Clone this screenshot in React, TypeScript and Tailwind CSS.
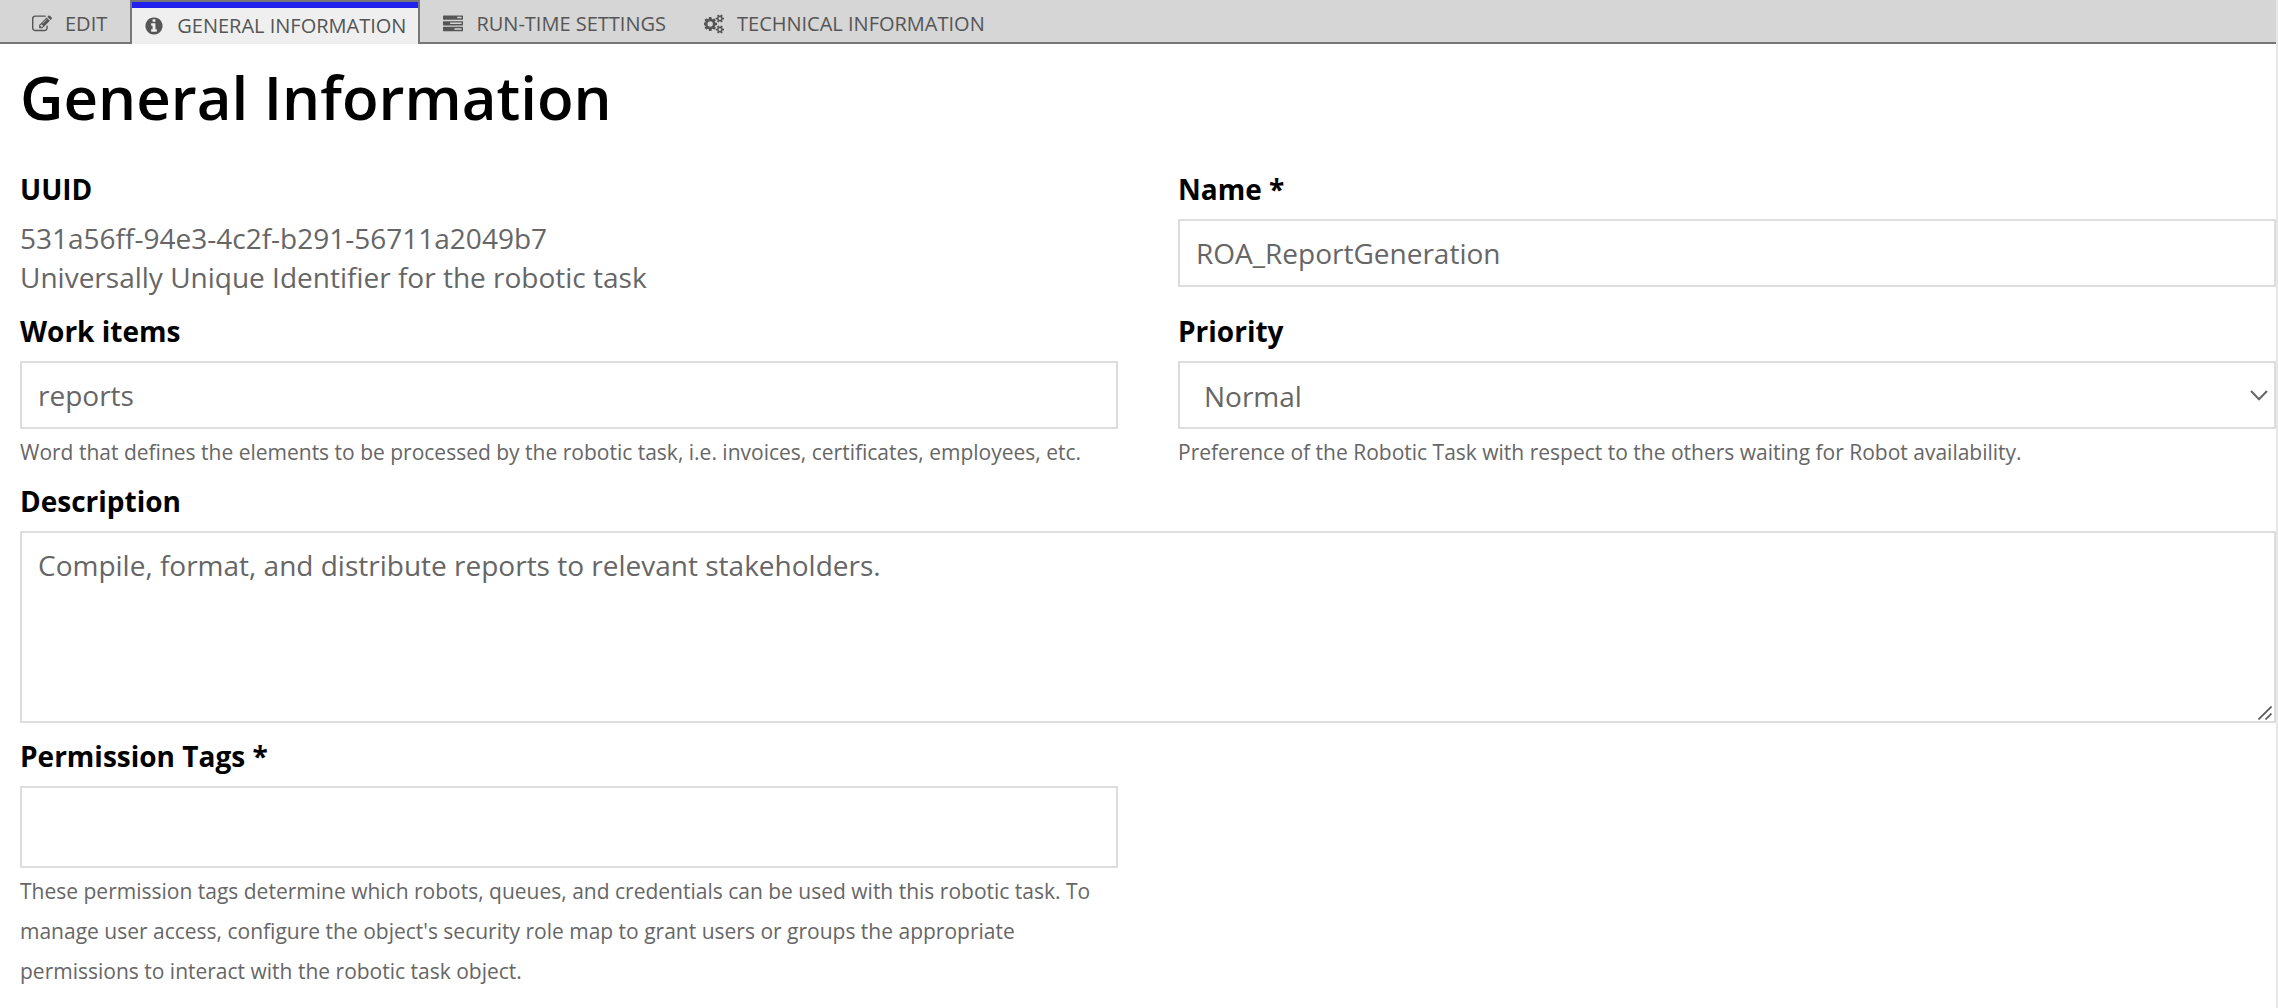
import type { ReactNode } from "react";

const labelClass = "mb-[11px] block text-[28px] leading-[38px] font-bold text-black";
const hintClass = "mt-[3px] text-[21px] leading-[40px] text-[#666666]";
const boxClass =
  "block w-full rounded-none border-2 border-[#dddddd] bg-white text-[28px] leading-[39px] text-[#666666] outline-none";

const icons = {
  edit: {
    viewBox: "0 0 1792 1792",
    d: "M888 1184l116-116-152-152-116 116v56h96v96h56zm440-720q-16-16-33 1l-350 350q-17 17-1 33t33-1l350-350q17-17 1-33zm80 594v190q0 119-84.5 203.5t-203.5 84.5h-832q-119 0-203.5-84.5t-84.5-203.5v-832q0-119 84.5-203.5t203.5-84.5h832q63 0 117 25 15 7 18 23 3 17-9 29l-49 49q-14 14-32 8-23-6-45-6h-832q-66 0-113 47t-47 113v832q0 66 47 113t113 47h832q66 0 113-47t47-113v-126q0-13 9-22l64-64q15-15 35-7t20 29zm-96-738l288 288-672 672h-288v-288zm444 132l-92 92-288-288 92-92q28-28 68-28t68 28l152 152q28 28 28 68t-28 68z",
  },
  info: {
    viewBox: "0 0 1792 1792",
    d: "M1152 1376v-160q0-14-9-23t-23-9h-96v-512q0-14-9-23t-23-9h-320q-14 0-23 9t-9 23v160q0 14 9 23t23 9h96v320h-96q-14 0-23 9t-9 23v160q0 14 9 23t23 9h448q14 0 23-9t9-23zm-128-896v-160q0-14-9-23t-23-9h-192q-14 0-23 9t-9 23v160q0 14 9 23t23 9h192q14 0 23-9t9-23zm640 416q0 209-103 385.5t-279.5 279.5-385.5 103-385.5-103-279.5-279.5-103-385.5 103-385.5 279.5-279.5 385.5-103 385.5 103 279.5 279.5 103 385.5z",
  },
  tasks: {
    viewBox: "0 0 1792 1792",
    d: "M1024 1408h640v-128h-640v128zm-384-512h1024v-128h-1024v128zm640-512h384v-128h-384v128zm512 832v256q0 26-19 45t-45 19h-1664q-26 0-45-19t-19-45v-256q0-26 19-45t45-19h1664q26 0 45 19t19 45zm0-512v256q0 26-19 45t-45 19h-1664q-26 0-45-19t-19-45v-256q0-26 19-45t45-19h1664q26 0 45 19t19 45zm0-512v256q0 26-19 45t-45 19h-1664q-26 0-45-19t-19-45v-256q0-26 19-45t45-19h1664q26 0 45 19t19 45z",
  },
  cogs: {
    viewBox: "0 0 1856 1792",
    d: "M832 896q0-106-75-181t-181-75-181 75-75 181 75 181 181 75 181-75 75-181zm768 512q0-52-38-90t-90-38-90 38-38 90q0 53 37.5 90.5t90.5 37.5 90.5-37.5 37.5-90.5zm0-1024q0-52-38-90t-90-38-90 38-38 90q0 53 37.5 90.5t90.5 37.5 90.5-37.5 37.5-90.5zm-384 421v185q0 10-7 19.5t-16 10.5l-155 24q-11 35-32 76 34 48 90 115 7 11 7 20 0 12-7 19-23 30-82.5 89.5t-78.5 59.5q-11 0-21-7l-115-90q-37 19-77 31-11 108-23 155-7 24-30 24h-186q-11 0-20-7.5t-10-17.5l-23-153q-34-10-75-31l-118 89q-7 7-20 7-11 0-21-8-144-133-144-160 0-9 7-19 10-14 41-53t47-61q-23-44-35-82l-152-24q-10-1-17-9.5t-7-19.5v-185q0-10 7-19.5t16-10.5l155-24q11-35 32-76-34-48-90-115-7-11-7-20 0-12 7-20 22-30 82-89t79-59q11 0 21 7l115 90q34-18 77-32 11-108 23-154 7-24 30-24h186q11 0 20 7.5t10 17.5l23 153q34 10 75 31l118-89q8-7 20-7 11 0 21 8 144 133 144 160 0 8-7 19-12 16-42 54t-45 60q23 48 34 82l152 23q10 2 17 10.5t7 19.5zm640 533v140q0 16-149 31-12 27-30 52 51 113 51 138 0 4-4 7-122 71-124 71-8 0-46-47t-52-68q-20 2-30 2t-30-2q-14 21-52 68t-46 47q-2 0-124-71-4-3-4-7 0-25 51-138-18-25-30-52-149-15-149-31v-140q0-16 149-31 13-29 30-52-51-113-51-138 0-4 4-7 4-2 35-20t59-34 30-16q8 0 46 46.5t52 67.5q20-2 30-2t30 2q51-71 92-112l6-2q4 0 124 70 4 3 4 7 0 25-51 138 17 23 30 52 149 15 149 31zm0-1024v140q0 16-149 31-12 27-30 52 51 113 51 138 0 4-4 7-122 71-124 71-8 0-46-47t-52-68q-20 2-30 2t-30-2q-14 21-52 68t-46 47q-2 0-124-71-4-3-4-7 0-25 51-138-18-25-30-52-149-15-149-31v-140q0-16 149-31 13-29 30-52-51-113-51-138 0-4 4-7 4-2 35-20t59-34 30-16q8 0 46 46.5t52 67.5q20-2 30-2t30 2q51-71 92-112l6-2q4 0 124 70 4 3 4 7 0 25-51 138 17 23 30 52 149 15 149 31z",
  },
};

function Tab({ icon, children, active }: { icon: keyof typeof icons; children: ReactNode; active?: boolean }) {
  return (
    <button
      type="button"
      role="tab"
      aria-selected={!!active}
      className={
        active
          ? "mx-1 flex h-[44px] items-center gap-[13px] border-x-2 border-t-2 border-[#777777] bg-[#efefef] px-3 pt-[6px] text-[20px] text-[#555555] shadow-[inset_0_6px_0_#2222ee]"
          : "flex h-[42px] items-center gap-[13px] px-[19px] pt-[6px] text-[20px] text-[#555555]"
      }
    >
      <svg viewBox={icons[icon].viewBox} className="h-5 w-5" fill="currentColor" aria-hidden="true">
        <path d={icons[icon].d} />
      </svg>
      {children}
    </button>
  );
}

export default function App() {
  return (
    <div className="flex min-h-screen flex-col border-r-2 border-[#e8e8e8] bg-white font-['Open_Sans',sans-serif]">
      <nav role="tablist" className="flex h-[44px] items-start border-b-2 border-[#777777] bg-[#d6d6d6] pl-[13px]">
        <Tab icon="edit">EDIT</Tab>
        <Tab icon="info" active>
          GENERAL INFORMATION
        </Tab>
        <Tab icon="tasks">RUN-TIME SETTINGS</Tab>
        <Tab icon="cogs">TECHNICAL INFORMATION</Tab>
      </nav>
      <main className="grow pl-5">
        <h1 className="mt-3 text-[60px] leading-[82px] font-semibold text-black">General Information</h1>
        <form className="mt-8 grid grid-cols-2 gap-x-[60px] gap-y-[10px]">
          <section className="pb-[5px]">
            <h2 className={labelClass}>UUID</h2>
            <p className="text-[28px] leading-[39px] text-[#666666]">
              531a56ff-94e3-4c2f-b291-56711a2049b7
              <br />
              Universally Unique Identifier for the robotic task
            </p>
          </section>
          <section>
            <label htmlFor="name" className={labelClass}>
              Name *
            </label>
            <input id="name" className={`${boxClass} h-[68px] px-4`} defaultValue="ROA_ReportGeneration" />
          </section>
          <section>
            <label htmlFor="items" className={labelClass}>
              Work items
            </label>
            <input id="items" className={`${boxClass} h-[68px] px-4`} defaultValue="reports" />
            <p className={hintClass}>
              Word that defines the elements to be processed by the robotic task, i.e. invoices, certificates,
              employees, etc.
            </p>
          </section>
          <section>
            <label htmlFor="priority" className={labelClass}>
              Priority
            </label>
            <div className="relative">
              <select id="priority" className={`${boxClass} h-[68px] appearance-none px-6 pt-[2px]`} defaultValue="Normal">
                <option>Normal</option>
              </select>
              <svg
                viewBox="0 0 18 11"
                className="pointer-events-none absolute top-[29px] right-2 h-[11px] w-[18px]"
                fill="none"
                stroke="#666666"
                strokeWidth="2"
                aria-hidden="true"
              >
                <path d="M1 1 L9 9.2 L17 1" />
              </svg>
            </div>
            <p className={hintClass}>
              Preference of the Robotic Task with respect to the others waiting for Robot availability.
            </p>
          </section>
          <section className="col-span-2 pb-1">
            <label htmlFor="description" className={labelClass}>
              Description
            </label>
            <div className="relative">
              <textarea
                id="description"
                className={`${boxClass} h-[192px] resize-none px-4 py-[13px]`}
                defaultValue="Compile, format, and distribute reports to relevant stakeholders."
              />
              <svg
                viewBox="0 0 14 14"
                className="pointer-events-none absolute right-1 bottom-[3px] h-[14px] w-[14px]"
                fill="none"
                stroke="#555555"
                strokeWidth="1.6"
                aria-hidden="true"
              >
                <path d="M0.5 13.5 L13.5 0.5 M7.5 13.5 L13.5 7.5" />
              </svg>
            </div>
          </section>
          <section>
            <label htmlFor="tags" className={labelClass}>
              Permission Tags *
            </label>
            <input id="tags" className={`${boxClass} h-[82px] px-4`} />
            <p className={hintClass}>
              These permission tags determine which robots, queues, and credentials can be used with this robotic task.
              To manage user access, configure the object's security role map to grant users or groups the appropriate
              permissions to interact with the robotic task object.
            </p>
          </section>
        </form>
      </main>
    </div>
  );
}
